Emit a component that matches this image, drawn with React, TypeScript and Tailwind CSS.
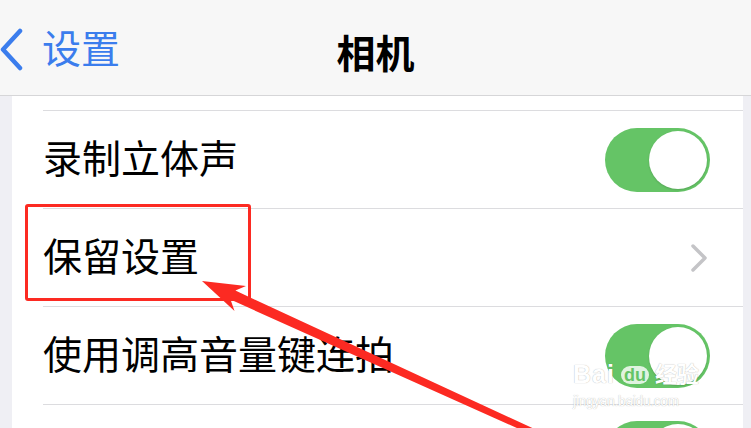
const font = 'font-["Liberation_Sans","Noto_Sans_CJK_SC",sans-serif]';

function Toggle() {
    return (
        <div className="w-[105px] h-[64px] rounded-full bg-[#65c466] flex items-center justify-end pr-[3px] shrink-0">
            <div className="w-[58px] h-[58px] rounded-full bg-white shadow-[0_1px_2px_rgba(0,0,0,0.15)]" />
        </div>
    );
}

function Row({ label, children }: { label: string; children?: React.ReactNode }) {
    return (
        <div className="pl-[31px]">
            <div className="h-[98px] border-t border-[#dcdcdf] flex items-center justify-between pr-[33px]">
                <span className="text-[39px] leading-none text-black">{label}</span>
                {children}
            </div>
        </div>
    );
}

export default function App() {
    return (
        <div className={`relative w-[751px] h-[428px] overflow-hidden bg-[#efeff4] ${font}`}>
            {/* Nav bar */}
            <div className="h-[96px] bg-[#f7f7f7] border-b border-[#d6d6d8] flex items-center relative">
                <div className="flex items-center text-[#3b7ded] mt-[4px]">
                    <svg width="24" height="44" viewBox="0 0 24 44" className="shrink-0">
                        <polyline
                            points="20,3 3,21.5 20,40"
                            fill="none"
                            stroke="currentColor"
                            strokeWidth="4.5"
                            strokeLinecap="round"
                            strokeLinejoin="round"
                        />
                    </svg>
                    <span className="text-[39px] leading-none ml-[18px]">设置</span>
                </div>
                <div className="absolute inset-x-0 top-[35px] text-center text-[39px] leading-none font-bold text-black">
                    相机
                </div>
            </div>

            {/* List card */}
            <div className="ml-[12px] mr-[8px] bg-white">
                <div className="h-[14px]" />
                <Row label="录制立体声">
                    <Toggle />
                </Row>
                <Row label="保留设置">
                    <svg width="20" height="32" viewBox="0 0 20 32" className="text-[#c4c4c7] mr-[1px]">
                        <polyline
                            points="4,4 16,16 4,28"
                            fill="none"
                            stroke="currentColor"
                            strokeWidth="3.5"
                            strokeLinecap="round"
                            strokeLinejoin="round"
                        />
                    </svg>
                </Row>
                <Row label="使用调高音量键连拍">
                    <Toggle />
                </Row>
                <Row label="">
                    <div className="self-start mt-[16px]">
                        <Toggle />
                    </div>
                </Row>
            </div>

            {/* Annotation: red box */}
            <div className="absolute left-[25px] top-[204px] w-[226px] h-[97px] border-[3px] border-[#fc2a22] rounded-[3px]" />

            {/* Annotation: red arrow */}
            <svg className="absolute inset-0" width="751" height="428" viewBox="0 0 751 428">
                <polygon
                    fill="#fc2a22"
                    points="202,281 246,286 235.4,290.6 574.5,447.5 571.5,452.5 230.5,299.6 234.5,311"
                />
            </svg>

            {/* Watermark */}
            <div className="absolute left-[573px] top-[362px] text-white [text-shadow:0_0_1px_rgba(0,0,0,0.35)] leading-none">
                <div className="flex items-center">
                    <span className="text-[25px] font-bold tracking-[1px]">Bai</span>
                    <span className="ml-[6px] px-[3px] rounded-[10px] bg-white/80 text-[#65c466] text-[18px] font-bold [text-shadow:none]">du</span>
                    <span className="ml-[6px] text-[22px] font-bold">经验</span>
                </div>
                <div className="mt-[6px] text-[15px] tracking-[-0.2px] scale-x-[0.9] origin-left">jingyan.baidu.com</div>
            </div>
        </div>
    );
}
